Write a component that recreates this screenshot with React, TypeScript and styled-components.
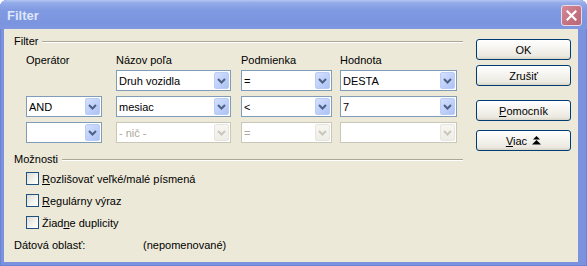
import React from 'react';
import styled, { createGlobalStyle } from 'styled-components';

const Global = createGlobalStyle`
  html, body { margin: 0; padding: 0; background: #ffffff; }
  body {
    font-family: "Liberation Sans", Arial, sans-serif;
    font-size: 11px;
    color: #000;
  }
`;

const Window = styled.div`
  width: 587px;
  height: 266px;
  display: flex;
  flex-direction: column;
  background: #7b93de;
  border-radius: 7px 7px 0 0;
  overflow: hidden;
  box-shadow: inset 0 0 0 1px #6d82d4;
`;

const TitleBar = styled.div`
  height: 29px;
  flex: none;
  display: flex;
  align-items: center;
  justify-content: space-between;
  padding: 1px 5px 0 7px;
  box-sizing: border-box;
  background: linear-gradient(
    to bottom,
    #b3c5f1 0%,
    #94abe9 10%,
    #809ae2 35%,
    #7a94df 80%,
    #8098e0 100%
  );
`;

const Title = styled.span`
  font-family: "Liberation Sans", Arial, sans-serif;
  font-weight: bold;
  font-size: 13px;
  color: #dde6fa;
`;

const CloseButton = styled.div`
  width: 21px;
  height: 21px;
  box-sizing: border-box;
  border: 1px solid #e9dbe6;
  border-radius: 3px;
  background: linear-gradient(135deg, #d48a98 0%, #c4707f 60%, #b9677a 100%);
  display: flex;
  align-items: center;
  justify-content: center;
`;

const Client = styled.div`
  flex: 1;
  margin: 0 9px 4px 4px;
  background: #ece9d8;
  display: flex;
`;

const LeftPane = styled.div`
  width: 449px;
  margin-left: 10px;
  padding-top: 5px;
  display: flex;
  flex-direction: column;
`;

const RightPane = styled.div`
  width: 95px;
  margin-left: 13px;
  padding-top: 10px;
  display: flex;
  flex-direction: column;
`;

const GroupHeader = styled.div<{ $mt?: number }>`
  display: flex;
  align-items: center;
  height: 14px;
  gap: 4px;
  margin-top: ${(p) => p.$mt ?? 0}px;
`;

const GroupLine = styled.div`
  flex: 1;
  height: 1px;
  background: #aca899;
  box-shadow: 0 1px 0 #ffffff;
`;

const COLUMNS = '90px 125px 99px 117px';

const HeaderGrid = styled.div`
  display: grid;
  grid-template-columns: ${COLUMNS};
  margin: 5px 0 0 12px;
  height: 14px;
  line-height: 14px;
`;

const ComboGrid = styled.div`
  display: grid;
  grid-template-columns: ${COLUMNS};
  grid-auto-rows: 21px;
  row-gap: 5px;
  margin: 3px 0 0 12px;
`;

const ComboBox = styled.div<{ $w: number; $disabled?: boolean }>`
  width: ${(p) => p.$w}px;
  height: 21px;
  box-sizing: border-box;
  border: 1px solid ${(p) => (p.$disabled ? '#c9c7ba' : '#7f9db9')};
  background: #ffffff;
  display: flex;
  align-items: center;
  padding-left: 2px;
`;

const ComboText = styled.span<{ $disabled?: boolean }>`
  flex: 1;
  color: ${(p) => (p.$disabled ? '#aca899' : '#000')};
  white-space: nowrap;
  overflow: hidden;
`;

const ArrowButton = styled.div<{ $disabled?: boolean }>`
  width: 15px;
  height: 17px;
  margin-right: 1px;
  box-sizing: border-box;
  border-radius: 2px;
  border: 1px solid ${(p) => (p.$disabled ? '#e8e6dc' : '#bacbf5')};
  background: ${(p) =>
    p.$disabled
      ? 'linear-gradient(to bottom, #f7f6f2, #eeede6)'
      : 'linear-gradient(135deg, #d4e0fd 0%, #c0d1fa 50%, #adc2f3 100%)'};
  display: flex;
  align-items: center;
  justify-content: center;
`;

const CheckList = styled.div`
  display: flex;
  flex-direction: column;
  gap: 9px;
  margin: 6px 0 0 12px;
`;

const CheckRow = styled.label`
  display: flex;
  align-items: center;
  gap: 3px;
  height: 13px;
`;

const CheckBox = styled.span`
  width: 13px;
  height: 13px;
  box-sizing: border-box;
  border: 1px solid #1c5180;
  background: linear-gradient(135deg, #dcdcd4 0%, #f4f4f0 60%, #ffffff 100%);
  flex: none;
`;

const U = styled.span`
  text-decoration: underline;
  text-underline-offset: 1px;
`;

const DataRow = styled.div`
  display: flex;
  margin-top: 9px;
  height: 14px;
  line-height: 14px;
`;

const DataLabel = styled.span`
  width: 129px;
`;

const Button = styled.button<{ $mt?: number }>`
  width: 95px;
  height: 21px;
  margin-top: ${(p) => p.$mt ?? 0}px;
  padding: 0;
  box-sizing: border-box;
  border: 1px solid #003c74;
  border-radius: 3px;
  background: linear-gradient(to bottom, #ffffff 0%, #f6f5f1 40%, #ebe9e0 85%, #d8d3c6 100%);
  font-family: "Liberation Sans", Arial, sans-serif;
  font-size: 11px;
  color: #000;
  display: flex;
  align-items: center;
  justify-content: center;
  gap: 5px;
`;

const Chevron: React.FC<{ disabled?: boolean }> = ({ disabled }) => (
  <svg width="9" height="6" viewBox="0 0 9 6">
    <path
      d="M1 1 L4.5 4.5 L8 1"
      fill="none"
      stroke={disabled ? '#c9c7ba' : '#4d6185'}
      strokeWidth="2"
    />
  </svg>
);

const UpIcon = () => (
  <svg width="9" height="9" viewBox="0 0 9 9">
    <polygon points="4.5,0 8,3.5 1,3.5" fill="#000" />
    <polygon points="4.5,4 9,8.5 0,8.5" fill="#000" />
  </svg>
);

type ComboProps = { w: number; value: string; disabled?: boolean };

const Combo: React.FC<ComboProps> = ({ w, value, disabled }) => (
  <ComboBox $w={w} $disabled={disabled}>
    <ComboText $disabled={disabled}>{value}</ComboText>
    <ArrowButton $disabled={disabled}>
      <Chevron disabled={disabled} />
    </ArrowButton>
  </ComboBox>
);

const Empty = styled.div``;

export default function App() {
  return (
    <>
      <Global />
      <Window>
        <TitleBar>
          <Title>Filter</Title>
          <CloseButton>
            <svg width="11" height="11" viewBox="0 0 11 11">
              <path d="M1.5 1.5 L9.5 9.5 M9.5 1.5 L1.5 9.5" stroke="#ffffff" strokeWidth="2.2" strokeLinecap="square" />
            </svg>
          </CloseButton>
        </TitleBar>
        <Client>
          <LeftPane>
            <GroupHeader>
              <span>Filter</span>
              <GroupLine />
            </GroupHeader>
            <HeaderGrid>
              <span>Operátor</span>
              <span>Názov poľa</span>
              <span>Podmienka</span>
              <span>Hodnota</span>
            </HeaderGrid>
            <ComboGrid>
              <Empty />
              <Combo w={115} value="Druh vozidla" />
              <Combo w={91} value="=" />
              <Combo w={117} value="DESTA" />

              <Combo w={76} value="AND" />
              <Combo w={115} value="mesiac" />
              <Combo w={91} value="<" />
              <Combo w={117} value="7" />

              <Combo w={76} value="" />
              <Combo w={115} value="- nič -" disabled />
              <Combo w={91} value="=" disabled />
              <Combo w={117} value="" disabled />
            </ComboGrid>
            <GroupHeader $mt={9}>
              <span>Možnosti</span>
              <GroupLine />
            </GroupHeader>
            <CheckList>
              <CheckRow>
                <CheckBox />
                <span>
                  <U>R</U>ozlišovať veľké/malé písmená
                </span>
              </CheckRow>
              <CheckRow>
                <CheckBox />
                <span>
                  <U>R</U>egulárny výraz
                </span>
              </CheckRow>
              <CheckRow>
                <CheckBox />
                <span>
                  Žiad<U>n</U>e duplicity
                </span>
              </CheckRow>
            </CheckList>
            <DataRow>
              <DataLabel>Dátová oblasť:</DataLabel>
              <span>(nepomenované)</span>
            </DataRow>
          </LeftPane>
          <RightPane>
            <Button>OK</Button>
            <Button $mt={5}>Zrušiť</Button>
            <Button $mt={14}>
              <span>
                <U>P</U>omocník
              </span>
            </Button>
            <Button $mt={9}>
              <span>
                <U>V</U>iac
              </span>
              <UpIcon />
            </Button>
          </RightPane>
        </Client>
      </Window>
    </>
  );
}
